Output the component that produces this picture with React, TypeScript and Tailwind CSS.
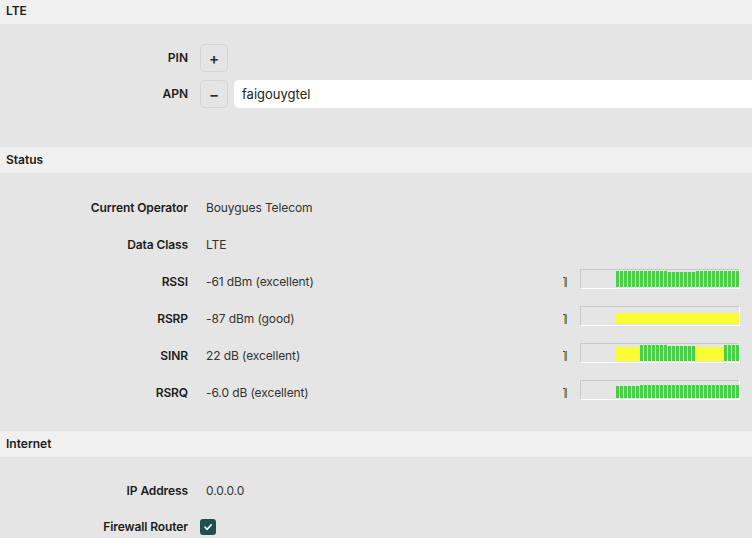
import type { ReactNode } from "react";

type Bar = { color: "g" | "y"; h: number };

const GREEN = "#47d246";
const YELLOW = "#fbfb34";

// build a run of bars of one colour and height
const run = (count: number, color: "g" | "y", h: number): Bar[] =>
  Array.from({ length: count }, () => ({ color, h }));

const signals = [
  {
    name: "RSSI",
    value: "-61 dBm (excellent)",
    bars: [...run(13, "g", 16), ...run(7, "g", 15), ...run(11, "g", 16)],
  },
  {
    name: "RSRP",
    value: "-87 dBm (good)",
    bars: run(31, "y", 11),
  },
  {
    name: "SINR",
    value: "22 dB (excellent)",
    bars: [...run(6, "y", 14), ...run(7, "g", 16), ...run(7, "g", 15), ...run(7, "y", 14), ...run(4, "g", 16)],
  },
  {
    name: "RSRQ",
    value: "-6.0 dB (excellent)",
    bars: [...run(6, "g", 12), ...run(25, "g", 13)],
  },
];

function SectionHeader({ title }: { title: string }) {
  return (
    <div className="flex h-[26px] items-center bg-[#f0f0f0] px-[6px] text-[12px] font-semibold text-[#1b1b1b]">
      {title}
    </div>
  );
}

function Label({ children }: { children: ReactNode }) {
  return (
    <div className="w-[188px] shrink-0 text-right text-[12px] font-semibold text-[#1c1c1c]">
      {children}
    </div>
  );
}

function HistoryIcon() {
  return (
    <svg width="4" height="10" viewBox="0 0 4 10" className="shrink-0">
      <rect x="0" y="0" width="2" height="1" fill="#6b3b22" />
      <rect x="1" y="1" width="1" height="9" fill="#f2a444" />
      <rect x="2" y="0" width="2" height="10" fill="#3f8fe2" />
    </svg>
  );
}

function SignalChart({ bars }: { bars: Bar[] }) {
  return (
    <div className="mb-[5px] mr-[12px] flex h-[20px] w-[160px] shrink-0 items-end border-t border-l border-t-[#c8c8c8] border-l-[#c8c8c8] border-b border-r border-b-white border-r-white pb-[1px]">
      <div className="ml-[31px] mr-[4px] h-px w-[3px] bg-[#b8b8b8]" />
      <div className="flex items-end gap-px">
        {bars.map((bar, i) => (
          <div
            key={i}
            className="w-[3px]"
            style={{ height: bar.h, background: bar.color === "g" ? GREEN : YELLOW }}
          />
        ))}
      </div>
    </div>
  );
}

export default function App() {
  return (
    <div
      className="-mt-[2px] w-full bg-[#e4e5e4] pb-2 text-[#222]"
      style={{ fontFamily: "Inter, 'Noto Sans', sans-serif" }}
    >
      <SectionHeader title="LTE" />
      <div className="flex flex-col gap-2 pt-[20px] pb-[39px]">
        <div className="flex h-[28px] items-center">
          <Label>PIN</Label>
          <button
            type="button"
            className="ml-[12px] flex h-[28px] w-[28px] items-center justify-center rounded-[5px] border border-[#d3d4d3] text-[15px] font-semibold leading-none text-[#2a2a2a]"
          >
            +
          </button>
        </div>
        <div className="flex h-[28px] items-center">
          <Label>APN</Label>
          <button
            type="button"
            className="ml-[12px] flex h-[28px] w-[28px] items-center justify-center rounded-[5px] border border-[#d3d4d3] text-[15px] font-semibold leading-none text-[#2a2a2a]"
          >
            −
          </button>
          <input
            readOnly
            value="faigouygtel"
            className="ml-[6px] h-[28px] flex-1 rounded-l-[5px] bg-white pl-[8px] text-[13px] text-[#222] outline-none"
          />
        </div>
      </div>

      <SectionHeader title="Status" />
      <div className="pt-[16px] pb-[20px] tracking-[-0.1px]">
        <div className="flex h-[37px] items-center">
          <Label>Current Operator</Label>
          <div className="ml-[18px] text-[12px] text-[#333]">Bouygues Telecom</div>
        </div>
        <div className="flex h-[37px] items-center">
          <Label>Data Class</Label>
          <div className="ml-[18px] text-[12px] text-[#333]">LTE</div>
        </div>
        {signals.map((s) => (
          <div key={s.name} className="flex h-[37px] items-center">
            <Label>{s.name}</Label>
            <div className="ml-[18px] flex-1 text-[12px] text-[#333]">{s.value}</div>
            <div className="mr-[13px]">
              <HistoryIcon />
            </div>
            <SignalChart bars={s.bars} />
          </div>
        ))}
      </div>

      <SectionHeader title="Internet" />
      <div className="pt-[16px] tracking-[-0.1px]">
        <div className="flex h-[36px] items-center">
          <Label>IP Address</Label>
          <div className="ml-[18px] text-[12px] text-[#333]">0.0.0.0</div>
        </div>
        <div className="flex h-[36px] items-center">
          <Label>Firewall Router</Label>
          <div className="ml-[12px] flex h-[16px] w-[16px] items-center justify-center rounded-[3px] bg-[#1f514c]">
            <svg width="10" height="10" viewBox="0 0 10 10" fill="none">
              <path d="M2 5.2 L4.2 7.3 L8.2 2.9" stroke="white" strokeWidth="1.6" strokeLinecap="round" strokeLinejoin="round" />
            </svg>
          </div>
        </div>
      </div>
    </div>
  );
}
